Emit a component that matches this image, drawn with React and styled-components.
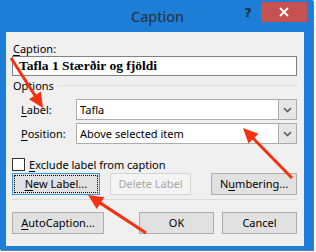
import styled, { createGlobalStyle } from 'styled-components';

const GlobalStyle = createGlobalStyle`
  html, body {
    margin: 0;
    padding: 0;
    background: #ffffff;
  }
  body {
    font-family: "Noto Sans", "Open Sans", sans-serif;
    font-size: 11px;
    color: #000;
  }
`;

const Stage = styled.div`
  position: relative;
  width: 316px;
  height: 252px;
  overflow: hidden;
`;

const Window = styled.div`
  width: 313px;
  height: 250px;
  background: #1c7ed6;
  box-shadow: 1px 1px 0 #5a7da0;
  display: flex;
  flex-direction: column;
`;

const TitleBar = styled.div`
  height: 32px;
  display: grid;
  grid-template-columns: 1fr auto 1fr;
  align-items: start;
`;

const Title = styled.div`
  grid-column: 2;
  font-size: 14.5px;
  line-height: 33px;
  color: #2a2f35;
  margin-left: 2px;
`;

const Controls = styled.div`
  grid-column: 3;
  justify-self: end;
  display: flex;
  align-items: flex-start;
  margin-right: 6px;
  padding-top: 2px;
`;

const HelpButton = styled.div`
  width: 22px;
  height: 20px;
  margin-right: 2px;
  font-family: "DejaVu Sans", sans-serif;
  font-weight: bold;
  font-size: 13px;
  line-height: 22px;
  text-align: center;
  color: #1f2a36;
`;

const CloseButton = styled.div`
  width: 46px;
  height: 20px;
  background: #c75050;
  display: flex;
  align-items: center;
  justify-content: center;
`;

const Panel = styled.div`
  margin-left: 6px;
  width: 298px;
  height: 214px;
  background: #f0f0f0;
  box-sizing: border-box;
  padding: 0 7px 0 6px;
  display: flex;
  flex-direction: column;
`;

const FieldLabel = styled.div`
  margin: 9px 0 0 1px;
  height: 15px;
  line-height: 15px;
`;

const Key = styled.span`
  text-decoration: underline;
  text-underline-offset: 2px;
`;

const TextInput = styled.div`
  height: 20px;
  box-sizing: border-box;
  border: 1px solid #7e8287;
  background: #fff;
  font-family: "Liberation Serif", serif;
  font-weight: bold;
  font-size: 13.5px;
  line-height: 18px;
  padding-left: 6px;
`;

const GroupHeader = styled.div`
  margin-top: 1px;
  height: 16px;
  display: flex;
  align-items: center;
  gap: 4px;
  padding-left: 1px;
`;

const GroupLine = styled.div`
  flex: 1;
  height: 1px;
  background: #dcdcdc;
`;

const FormRow = styled.div`
  margin-top: ${(p) => p.$top}px;
  height: 21px;
  display: flex;
  align-items: center;
`;

const RowLabel = styled.div`
  width: 64px;
  padding-left: 9px;
  box-sizing: border-box;
`;

const Combo = styled.div`
  flex: 1;
  height: 21px;
  box-sizing: border-box;
  border: 1px solid #acacac;
  background: #fff;
  display: flex;
  align-items: stretch;
`;

const ComboText = styled.div`
  flex: 1;
  line-height: 19px;
  padding-left: 3px;
`;

const ComboArrow = styled.div`
  width: 17px;
  background: #e6e6e6;
  border-left: 1px solid #acacac;
  display: flex;
  align-items: center;
  justify-content: center;
`;

const CheckRow = styled.div`
  margin-top: 13px;
  height: 14px;
  display: flex;
  align-items: center;
  gap: 4px;
`;

const CheckBox = styled.div`
  width: 13px;
  height: 13px;
  box-sizing: border-box;
  border: 1px solid #333;
  background: #fff;
`;

const ButtonRow = styled.div`
  margin-top: ${(p) => p.$top}px;
  display: flex;
  gap: ${(p) => p.$gap || 10}px;
`;

const Spacer = styled.div`
  flex: 1;
`;

const Button = styled.div`
  width: ${(p) => p.$w}px;
  height: 22px;
  box-sizing: border-box;
  border: 1px solid ${(p) => (p.$focus ? '#3c98dc' : p.$disabled ? '#d5d5d5' : '#adadad')};
  background: ${(p) => (p.$disabled ? '#f4f4f4' : '#e1e1e1')};
  color: ${(p) => (p.$disabled ? '#a6a6a6' : '#000')};
  padding: 1px;
  display: flex;
`;

const ButtonFace = styled.div`
  flex: 1;
  border: 1px dotted ${(p) => (p.$focus ? '#000' : 'transparent')};
  display: flex;
  align-items: center;
  justify-content: center;
  line-height: 16px;
`;

const Separator = styled.div`
  margin-top: 4px;
  height: 1px;
  background: #dadada;
`;

const Overlay = styled.svg`
  position: absolute;
  left: 0;
  top: 0;
  pointer-events: none;
`;

const arrows = [
  { x1: 11, y1: 58, x2: 43, y2: 108 },
  { x1: 292, y1: 178, x2: 243, y2: 128 },
  { x1: 146, y1: 233, x2: 88, y2: 195 },
];

const Arrow = ({ x1, y1, x2, y2 }) => {
  const dx = x2 - x1;
  const dy = y2 - y1;
  const len = Math.hypot(dx, dy);
  const ux = dx / len;
  const uy = dy / len;
  const head = 15;
  const half = 7;
  const bx = x2 - ux * head;
  const by = y2 - uy * head;
  const pts = [
    [x2, y2],
    [bx - uy * half, by + ux * half],
    [bx + uy * half, by - ux * half],
  ]
    .map((p) => p.join(','))
    .join(' ');
  return (
    <g>
      <line x1={x1} y1={y1} x2={bx + ux * 2} y2={by + uy * 2} stroke="#f5310f" strokeWidth="3" />
      <polygon points={pts} fill="#f5310f" />
    </g>
  );
};

const Chevron = () => (
  <svg width="9" height="6" viewBox="0 0 9 6">
    <path d="M1 1 L4.5 4.5 L8 1" fill="none" stroke="#5a5a5a" strokeWidth="1.6" />
  </svg>
);

const CloseIcon = () => (
  <svg width="10" height="10" viewBox="0 0 10 10">
    <path d="M1 1 L9 9 M9 1 L1 9" stroke="#fff" strokeWidth="1.8" />
  </svg>
);

const App = () => {
  return (
    <Stage>
      <GlobalStyle />
      <Window>
        <TitleBar>
          <Title>Caption</Title>
          <Controls>
            <HelpButton>?</HelpButton>
            <CloseButton>
              <CloseIcon />
            </CloseButton>
          </Controls>
        </TitleBar>
        <Panel>
          <FieldLabel>
            <Key>C</Key>aption:
          </FieldLabel>
          <TextInput>Tafla 1 Stærðir og fjöldi</TextInput>
          <GroupHeader>
            Options
            <GroupLine />
          </GroupHeader>
          <FormRow $top={6}>
            <RowLabel>
              <Key>L</Key>abel:
            </RowLabel>
            <Combo>
              <ComboText>Tafla</ComboText>
              <ComboArrow>
                <Chevron />
              </ComboArrow>
            </Combo>
          </FormRow>
          <FormRow $top={3}>
            <RowLabel>
              <Key>P</Key>osition:
            </RowLabel>
            <Combo>
              <ComboText>Above selected item</ComboText>
              <ComboArrow>
                <Chevron />
              </ComboArrow>
            </Combo>
          </FormRow>
          <CheckRow>
            <CheckBox />
            <span>
              <Key>E</Key>xclude label from caption
            </span>
          </CheckRow>
          <ButtonRow $top={2}>
            <Button $w={92} $focus>
              <ButtonFace $focus>
                <span>
                  <Key>N</Key>ew Label...
                </span>
              </ButtonFace>
            </Button>
            <Button $w={85} $disabled>
              <ButtonFace>Delete Label</ButtonFace>
            </Button>
            <Spacer />
            <Button $w={90}>
              <ButtonFace>
                <span>
                  N<Key>u</Key>mbering...
                </span>
              </ButtonFace>
            </Button>
          </ButtonRow>
          <Separator />
          <ButtonRow $top={12} $gap={8}>
            <Button $w={92}>
              <ButtonFace>
                <span>
                  <Key>A</Key>utoCaption...
                </span>
              </ButtonFace>
            </Button>
            <Spacer />
            <Button $w={75}>
              <ButtonFace>OK</ButtonFace>
            </Button>
            <Button $w={75}>
              <ButtonFace>Cancel</ButtonFace>
            </Button>
          </ButtonRow>
        </Panel>
      </Window>
      <Overlay width="316" height="252" viewBox="0 0 316 252">
        {arrows.map((a, i) => (
          <Arrow key={i} {...a} />
        ))}
      </Overlay>
    </Stage>
  );
};

export default App;
